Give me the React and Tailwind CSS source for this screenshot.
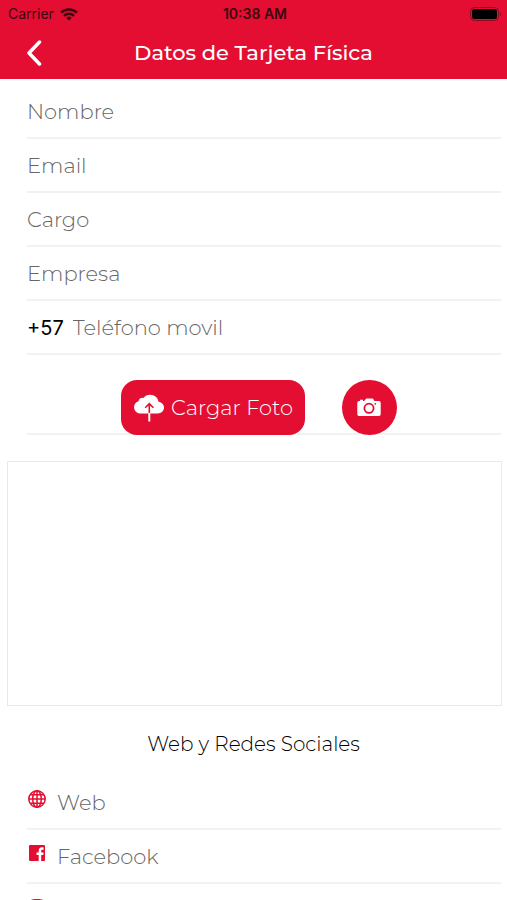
import { FaInstagram } from "react-icons/fa";

const campos = [
  { id: "nombre", label: "Nombre", type: "text" },
  { id: "email", label: "Email", type: "email" },
  { id: "cargo", label: "Cargo", type: "text" },
  { id: "empresa", label: "Empresa", type: "text" },
];

const redes = [
  { id: "web", label: "Web", Icono: IconoWeb },
  { id: "facebook", label: "Facebook", Icono: IconoFacebook },
  { id: "instagram", label: "Instagram", Icono: FaInstagram },
];

function IconoWifi() {
  return (
    <svg viewBox="0 0 18 13" className="w-[18px] h-[13px]" fill="none" stroke="currentColor" strokeWidth="2.5">
      <path d="M1 4.7a11.3 11.3 0 0 1 16 0" />
      <path d="M4 7.9a7 7 0 0 1 10 0" />
      <path d="M9 12.6 6.3 9.9a3.8 3.8 0 0 1 5.4 0z" fill="currentColor" stroke="none" />
    </svg>
  );
}

function IconoBateria() {
  return (
    <svg viewBox="0 0 32 14" className="w-8 h-[14px]">
      <rect x="0.5" y="0.5" width="28" height="13" rx="4" fill="none" stroke="#8f0b20" />
      <rect x="2" y="2" width="25" height="10" rx="2.5" fill="#000" />
      <path d="M30 5v4c1.4-.5 1.4-3.5 0-4z" fill="#8f0b20" />
    </svg>
  );
}

function IconoNube() {
  return (
    <svg viewBox="0 0 32 28" className="w-8 h-7 shrink-0">
      <path
        d="M7.500 19.500A6.500 6.500 0 0 1 1 13.200c0-3 1.900-5.300 4.500-6C6 4.500 8.400 3.400 10.600 4 12 1.800 14.200.8 17 .8c4.600 0 8 3 8.500 7 3.200.5 5.500 2.800 5.500 5.800 0 3.300-2.700 5.900-6.200 5.900z"
        fill="#fff"
      />
      <path d="M16.300 19.500V10M12.200 13.700l4.100-4.100 4.100 4.100" fill="none" stroke="#e30e31" strokeWidth="1.6" />
      <path d="M16.300 19v8.500" stroke="#fff" strokeWidth="2" />
    </svg>
  );
}

function IconoCamara() {
  return (
    <svg viewBox="0 0 24 19" className="w-6 h-[19px]">
      <path
        d="M2 3h1V1.800h3V3h1.200L9 .8Q9.300.4 10 .4h5q.7 0 1 .4L17.600 3H22a1.700 1.700 0 0 1 1.700 1.700v11.600A1.700 1.700 0 0 1 22 18H2A1.700 1.700 0 0 1 .3 16.300V4.700A1.700 1.700 0 0 1 2 3z"
        fill="#fff"
      />
      <circle cx="12" cy="10.300" r="4.600" fill="none" stroke="#e30e31" strokeWidth="1.800" />
      <circle cx="18.300" cy="5.800" r="0.900" fill="#e30e31" />
    </svg>
  );
}

function IconoWeb({ className }) {
  return (
    <svg viewBox="0 0 18 18" className={className} fill="none" stroke="currentColor" strokeWidth="1.500">
      <circle cx="9" cy="9" r="8.200" />
      <ellipse cx="9" cy="9" rx="4.300" ry="8.200" />
      <path d="M9 .8v16.400M.8 9h16.400M2.200 4.800h13.600M2.200 13.200h13.600" />
    </svg>
  );
}

function IconoFacebook({ className }) {
  return (
    <svg viewBox="0 0 18 18" className={className}>
      <path
        d="M2 1h14a1 1 0 0 1 1 1v14a1 1 0 0 1-1 1h-2.800v-6.100h2.100l.3-2.500h-2.400V7c0-.8.300-1.300 1.300-1.300h1.100V3.500c-.5-.1-1-.2-1.700-.2-2 0-3.200 1.200-3.200 3.400v1.700H8.500v2.500h2.200V17H2a1 1 0 0 1-1-1V2a1 1 0 0 1 1-1z"
        fill="currentColor"
      />
    </svg>
  );
}

function App() {
  return (
    <div className="h-screen flex flex-col bg-white font-[Montserrat,Inter,sans-serif]">
      <header className="shrink-0 bg-[#e30e31]">
        {/* Barra de estado */}
        <div className="grid grid-cols-3 items-center h-7 pl-2 pr-[5px] text-[#3d0610] font-[Inter,sans-serif] text-sm">
          <div className="flex items-center gap-1.5">
            <span>Carrier</span>
            <IconoWifi />
          </div>
          <span className="text-center font-semibold">10:38 AM</span>
          <div className="flex justify-end">
            <IconoBateria />
          </div>
        </div>
        {/* Titulo */}
        <div className="grid grid-cols-[67px_1fr_67px] items-center h-[51px] pb-0.5">
          <button type="button" aria-label="Volver" className="flex justify-center text-white">
            <svg viewBox="0 0 16 26" className="w-4 h-[26px]" fill="none" stroke="currentColor" strokeWidth="3.500" strokeLinecap="round" strokeLinejoin="round">
              <path d="M13.500 2 3 13l10.500 11" />
            </svg>
          </button>
          <h1 className="text-center text-[21px] leading-7 font-medium text-white">
            Datos de Tarjeta Física
          </h1>
        </div>
      </header>

      <main className="flex-1 min-h-0 overflow-y-auto [scrollbar-width:none] pt-1.5">
        <form>
          <div className="pl-[27px] pr-1.5">
            {campos.map((campo) => (
              <div key={campo.id} className="h-[54px] pt-0.5 flex items-center border-b-2 border-[#f2f2f2]">
                <input
                  id={campo.id}
                  type={campo.type}
                  aria-label={campo.label}
                  placeholder={campo.label}
                  className="w-full text-[21px] font-light text-black placeholder:text-[#666] outline-none"
                />
              </div>
            ))}
            <div className="h-[54px] pt-0.5 flex items-center gap-[9px] border-b-2 border-[#f2f2f2]">
              <label htmlFor="telefono" className="text-xl text-black font-[Inter,sans-serif]">
                +57
              </label>
              <input
                id="telefono"
                type="tel"
                placeholder="Teléfono movil"
                className="flex-1 min-w-0 text-[21px] font-light text-black placeholder:text-[#666] outline-none"
              />
            </div>
            {/* Botones de foto */}
            <div className="h-20 pt-[25px] pr-2.5 flex justify-center gap-[37px] border-b-2 border-[#f2f2f2]">
              <button
                type="button"
                className="h-[55px] px-3 flex items-center gap-1.5 rounded-2xl bg-[#e30e31] text-[21px] font-light text-white whitespace-nowrap"
              >
                <IconoNube />
                Cargar Foto
              </button>
              <button
                type="button"
                aria-label="Tomar foto"
                className="size-[55px] shrink-0 flex items-center justify-center rounded-full bg-[#e30e31]"
              >
                <IconoCamara />
              </button>
            </div>
          </div>

          <div className="pl-[7px] pr-[5px] pt-[26px]">
            <textarea
              aria-label="Descripción"
              className="block w-full h-[245px] resize-none border border-[#e9e9e9] p-2 text-lg outline-none"
            />
          </div>

          <h2 className="pt-6 pb-[18px] text-center text-xl leading-7 font-light text-black">
            Web y Redes Sociales
          </h2>

          {/* Redes sociales */}
          <div className="pl-[27px] pr-1.5">
            {redes.map(({ id, label, Icono }) => (
              <div key={id} className="h-[54px] pt-0.5 flex items-center gap-2.5 border-b-2 border-[#f2f2f2]">
                <Icono className="w-5 h-[18px] mb-2 shrink-0 text-[#e30e31]" />
                <input
                  id={id}
                  type="text"
                  aria-label={label}
                  placeholder={label}
                  className="flex-1 min-w-0 text-[21px] font-light text-black placeholder:text-[#666] outline-none"
                />
              </div>
            ))}
          </div>
        </form>
      </main>
    </div>
  );
}

export default App;
